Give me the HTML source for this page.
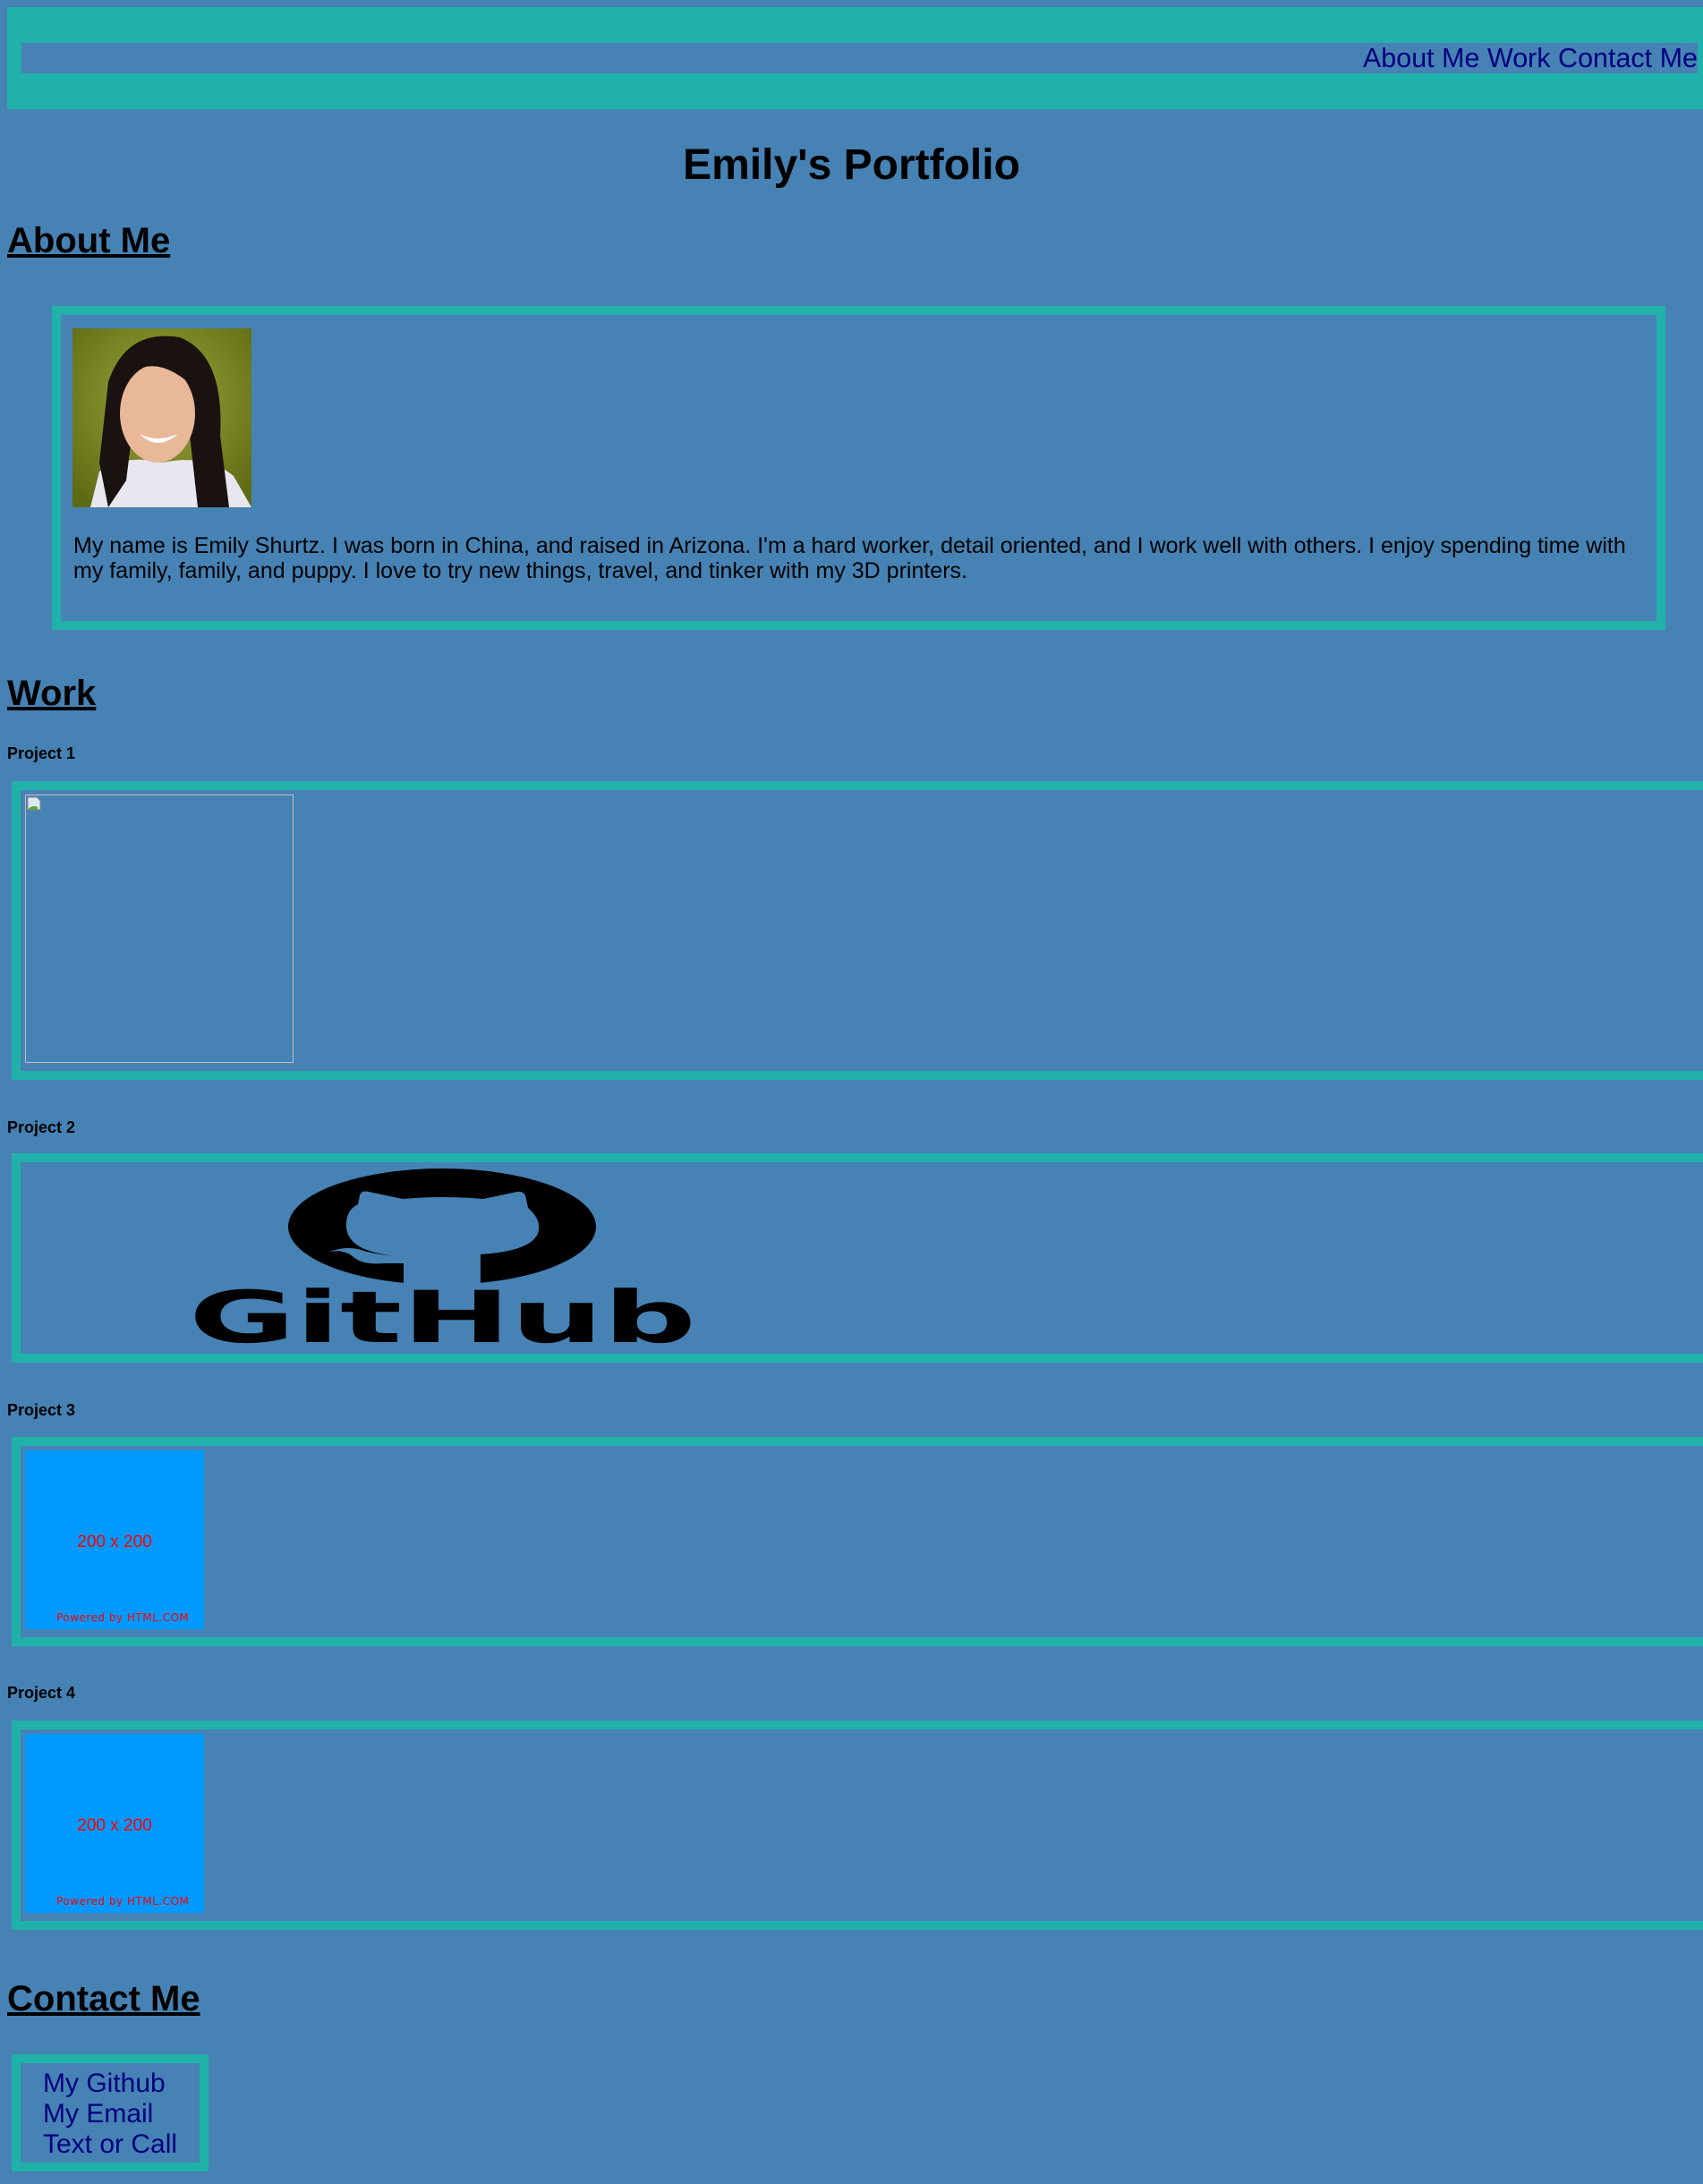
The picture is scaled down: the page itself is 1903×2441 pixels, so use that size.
<!DOCTYPE html>
<html><head><meta charset="utf-8"><style>
*{margin:0;padding:0;box-sizing:border-box}
html,body{width:1903px;height:2441px;overflow:hidden;background:#4682B4;font-family:"Liberation Sans",Arial,sans-serif;color:#000}
.a{position:absolute}
.tb{border:10px solid #20B2AA}
.nav{left:24px;top:48px;width:1873px;height:34px;background:#4682B4;text-align:right;font-size:30.5px;line-height:34px;color:#000080;white-space:nowrap}
h1{position:absolute;left:0;width:1903px;text-align:center;font-size:48px;line-height:56px;font-weight:bold}
h2{position:absolute;left:8px;font-size:40px;line-height:46px;font-weight:bold;text-decoration:underline}
h4{position:absolute;left:8px;font-size:18px;line-height:22px;font-weight:bold}
.ph{background:#0099FF;width:200px;height:200px;}
.ph .t{position:absolute;left:0;width:200px;top:92px;text-align:center;color:#f00;font-size:19px;font-family:"Liberation Sans Narrow","Liberation Sans",sans-serif}
.ph .p{position:absolute;left:35px;top:180px;color:#f00;font-size:12px;font-family:"DejaVu Sans",sans-serif;letter-spacing:0.5px}
</style></head><body>
<div class="a" style="left:8px;top:8px;width:1895px;height:114px;background:#20B2AA"></div>
<div class="a nav">About Me Work Contact Me</div>
<h1 style="top:157px">Emily's Portfolio</h1>
<h2 style="top:246px">About Me</h2>
<div class="a tb" style="left:58px;top:342px;width:1803px;height:362px"></div>
<svg class="a" style="left:81px;top:367px" width="200" height="200" viewBox="0 0 200 200">
<defs><radialGradient id="bg" cx="0.5" cy="0.4" r="0.7"><stop offset="0" stop-color="#9aa63a"/><stop offset="1" stop-color="#5f6a14"/></radialGradient></defs>
<rect width="200" height="200" fill="url(#bg)"/>
<path d="M20 200 L30 160 Q60 140 100 150 Q150 140 180 165 L200 200Z" fill="#e8e6ee"/>
<path d="M40 60 Q60 0 120 10 Q170 30 165 120 L175 200 L140 200 L130 110 Q90 40 70 90 L60 170 L40 200 L30 150 Z" fill="#1a1210"/>
<ellipse cx="95" cy="95" rx="42" ry="55" fill="#e8b898"/>
<path d="M55 60 Q90 20 140 70 L140 40 Q100 5 60 40Z" fill="#1a1210"/>
<path d="M75 118 Q95 138 118 118 Q95 128 75 118Z" fill="#fff"/>
</svg>
<div class="a" style="left:82px;top:596px;font-size:25px;line-height:28px;white-space:nowrap">My name is Emily Shurtz. I was born in China, and raised in Arizona. I'm a hard worker, detail oriented, and I work well with others. I enjoy spending time with<br>my family, family, and puppy. I love to try new things, travel, and tinker with my 3D printers.</div>

<h2 style="top:752px">Work</h2>
<h4 style="top:831px">Project 1</h4>
<div class="a tb" style="left:13px;top:873px;width:1900px;height:334px"></div>
<div class="a" style="left:28px;top:888px;width:300px;height:300px;border:1px solid #c0c0c0"></div>
<svg class="a" style="left:30px;top:890px" width="16" height="16" viewBox="0 0 16 16"><path d="M1 1h10l4 4v10H1z" fill="#dde8f4" stroke="#888"/><path d="M1 15 Q6 9 12 12 L12 15Z" fill="#5ca33a"/></svg>

<h4 style="top:1249px">Project 2</h4>
<div class="a tb" style="left:13px;top:1289px;width:1900px;height:234px"></div>
<svg class="a" style="left:205px;top:1305px" width="580" height="200" viewBox="205 1305 580 200">
<ellipse cx="494" cy="1371" rx="172" ry="65" fill="#000"/>
<path d="M451 1436 L451 1405 Q420 1402 405 1395 Q385 1385 387 1366 Q388 1352 400 1346 L402 1336 Q404 1330 412 1332 L450 1340 Q495 1336 540 1340 L578 1332 Q587 1331 588 1340 L590 1350 Q604 1362 602 1375 Q598 1398 537 1402 L537 1436 Z" fill="#4682B4"/>
<path d="M368 1399 Q385 1396 395 1405 Q405 1414 430 1412 L451 1412 L451 1404 Q420 1403 400 1396 Q385 1393 368 1399Z" fill="#4682B4"/>
<text x="211" y="1500" font-family="DejaVu Sans,sans-serif" font-weight="bold" font-size="80" textLength="567" lengthAdjust="spacingAndGlyphs">GitHub</text>
</svg>

<h4 style="top:1565px">Project 3</h4>
<div class="a tb" style="left:13px;top:1606px;width:1900px;height:234px"></div>
<div class="a ph" style="left:28px;top:1621px"><div class="t">200 x 200</div><div class="p">Powered by HTML.COM</div></div>

<h4 style="top:1881px">Project 4</h4>
<div class="a tb" style="left:13px;top:1923px;width:1900px;height:234px"></div>
<div class="a ph" style="left:28px;top:1938px"><div class="t">200 x 200</div><div class="p">Powered by HTML.COM</div></div>

<h2 style="top:2211px">Contact Me</h2>
<div class="a tb" style="left:13px;top:2296px;width:220px;height:131px"></div>
<div class="a" style="left:48px;top:2312px;font-size:30px;line-height:34px;color:#000080">My Github<br>My Email<br>Text or Call</div>
</body></html>
